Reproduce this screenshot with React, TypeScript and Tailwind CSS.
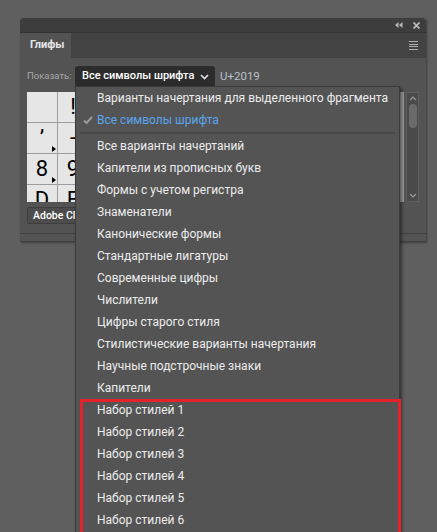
import React from 'react';

const font = { fontFamily: 'Roboto, "Noto Sans", sans-serif' };

const glyphRows = [
  ['', '!', '"', '#', '$', '%', '&', "'", '(', ')', '*', '+'],
  ['’', '‑', '.', '/', '0', '1', '2', '3', '4', '5', '6', '7'],
  ['8', '9', ':', ';', '<', '=', '>', '?', '@', 'A', 'B', 'C'],
  ['D', 'E', 'F', 'G', 'H', 'I', 'J', 'K', 'L', 'M', 'N', 'O'],
];

const marked: Record<string, boolean> = { '’': true, '8': true };

const topItems = [
  'Все варианты начертаний',
  'Капители из прописных букв',
  'Формы с учетом регистра',
  'Знаменатели',
  'Канонические формы',
  'Стандартные лигатуры',
  'Современные цифры',
  'Числители',
  'Цифры старого стиля',
  'Стилистические варианты начертания',
  'Научные подстрочные знаки',
  'Капители',
  'Набор стилей 1',
  'Набор стилей 2',
  'Набор стилей 3',
  'Набор стилей 4',
  'Набор стилей 5',
  'Набор стилей 6',
  'Набор стилей 7',
];

function GlyphCell({ ch }: { ch: string }) {
  return (
    <div className="relative flex h-[30px] w-[30px] shrink-0 items-center justify-center bg-[#e6e6e6] text-[22px] leading-none text-black">
      {ch}
      {marked[ch] && (
        <span className="absolute bottom-[1px] right-[1px] h-0 w-0 border-y-[3px] border-l-[4px] border-y-transparent border-l-black" />
      )}
    </div>
  );
}

function MenuItem({ label, selected }: { label: string; selected?: boolean }) {
  return (
    <div className="flex h-[22px] items-center whitespace-nowrap">
      <span className="flex w-[21px] justify-center">
        {selected && (
          <svg className="ml-[2px] h-[10px] w-[10px]" viewBox="0 0 10 10" fill="none" stroke="#9a9a9a" strokeWidth="2">
            <path d="M1 5.5l2.5 2.5L9 2" />
          </svg>
        )}
      </span>
      <span className={selected ? 'text-[#5aa5ee]' : 'text-[#ececec]'}>{label}</span>
    </div>
  );
}

export default function App() {
  return (
    <div className="relative h-[532px] w-[437px] overflow-hidden bg-[#5f5f5f] pl-[20px] pt-[18px]" style={font}>
      <div className="w-[406px] shadow-[1px_1px_2px_rgba(0,0,0,0.35)]">
        <div className="flex h-[14px] items-center justify-end gap-[10px] rounded-t-[4px] bg-[#3d3d3d] pr-[6px]">
          <svg className="h-[6px] w-[8px]" viewBox="0 0 8 6" fill="#b8b8b8">
            <path d="M0 3l3.5-3v6zM4 3l3.5-3v6z" />
          </svg>
          <svg className="h-[7px] w-[7px]" viewBox="0 0 7 7" stroke="#b8b8b8" strokeWidth="1.8">
            <path d="M0.5 0.5l6 6M6.5 0.5l-6 6" />
          </svg>
        </div>
        <div className="flex h-[26px] items-stretch border-t border-[#333] bg-[#434343]">
          <div className="flex w-[51px] items-center bg-[#535353] pl-[10px] text-[11px] font-bold text-[#e6e6e6]">
            Глифы
          </div>
          <div className="flex-1" />
          <div className="flex flex-col justify-center gap-[1.5px] pr-[8px]">
            <span className="h-[1px] w-[9px] bg-[#b0b0b0]" />
            <span className="h-[1px] w-[9px] bg-[#b0b0b0]" />
            <span className="h-[1px] w-[9px] bg-[#b0b0b0]" />
            <span className="h-[1px] w-[9px] bg-[#b0b0b0]" />
          </div>
        </div>
        <div className="h-[175px] bg-[#535353] px-[7px] pt-[8px]">
          <div className="flex h-[21px] items-center whitespace-nowrap">
            <span className="w-[48px] text-[9.5px] text-[#a8a8a8]">Показать:</span>
            <div className="flex h-[21px] w-[140px] items-center justify-between rounded-[3px] bg-[#2c2c2c] pl-[7px] pr-[6px] text-[11px] font-medium text-white">
              Все символы шрифта
              <svg className="h-[6px] w-[9px]" viewBox="0 0 9 6" fill="none" stroke="#e0e0e0" strokeWidth="1.6">
                <path d="M1 1l3.5 3.5L8 1" />
              </svg>
            </div>
            <span className="ml-[5px] text-[11.5px] text-[#b8c0c8]">U+2019</span>
          </div>
          <div className="mt-[5px] flex h-[110px]">
            <div className="flex flex-1 flex-col gap-[1px] overflow-hidden bg-[#9c9c9c]">
              {glyphRows.map((row, i) => (
                <div key={i} className="flex gap-[1px]">
                  {row.map((ch, j) => (
                    <GlyphCell key={j} ch={ch} />
                  ))}
                </div>
              ))}
            </div>
            <div className="ml-[2px] flex w-[13px] flex-col items-center border border-[#5e5e5e] bg-[#4a4a4a] py-[3px]">
              <svg className="h-[5px] w-[8px]" viewBox="0 0 8 5" fill="none" stroke="#9a9a9a" strokeWidth="1.2">
                <path d="M1 4l3-3 3 3" />
              </svg>
              <span className="mt-[3px] h-[24px] w-[8px] rounded-full bg-[#6a6a6a]" />
              <div className="flex-1" />
              <svg className="h-[5px] w-[8px]" viewBox="0 0 8 5" fill="none" stroke="#9a9a9a" strokeWidth="1.2">
                <path d="M1 1l3 3 3-3" />
              </svg>
            </div>
          </div>
          <div className="mt-[5px] flex h-[17px] w-[120px] items-center whitespace-nowrap rounded-[2px] border border-[#3e3e3e] bg-[#4c4c4c] pl-[5px] text-[10.5px] font-medium text-white">
            Adobe Clean Serif
          </div>
        </div>
        <div className="h-[9px] border-y border-[#404040] bg-[#535353]" />
      </div>

      <div className="absolute left-[75px] top-[86px] h-[460px] w-[325px] border border-[#3a3a3a] bg-[#545454] text-[12px] shadow-[2px_2px_3px_rgba(0,0,0,0.45)]">
        <MenuItem label="Варианты начертания для выделенного фрагмента" />
        <MenuItem label="Все символы шрифта" selected />
        <div className="mx-[4px] my-[1px] h-[2px] bg-[#484848]" />
        {topItems.map((t) => (
          <MenuItem key={t} label={t} />
        ))}
        <div className="absolute left-[4px] top-[312px] h-[200px] w-[321px] border-[3px] border-[#e4222a]" />
      </div>
    </div>
  );
}
